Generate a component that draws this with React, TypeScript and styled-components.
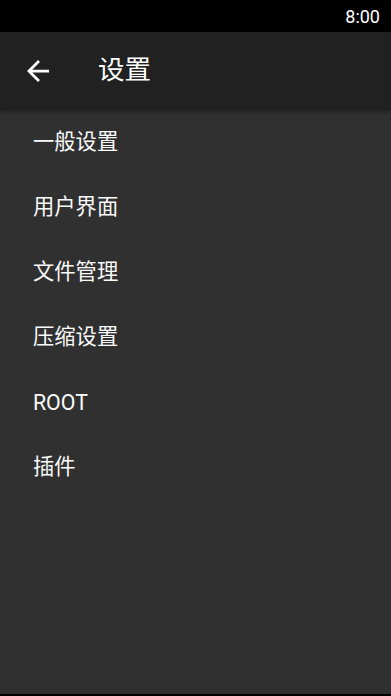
import React from "react";
import styled, { createGlobalStyle } from "styled-components";

const Global = createGlobalStyle`
  html, body { margin: 0; padding: 0; background: #303030; }
  body { font-family: Roboto, "Noto Sans CJK SC", sans-serif; }
  #root { height: 696px; }
`;

const Screen = styled.div`
  width: 391px;
  height: 696px;
  display: flex;
  flex-direction: column;
  background: #303030;
  overflow: hidden;
`;

const StatusBar = styled.div`
  height: 32px;
  background: #000;
  display: flex;
  align-items: center;
  justify-content: flex-end;
  padding-right: 11px;
  color: #fff;
  font-family: Roboto, sans-serif;
  font-size: 18px;
  flex-shrink: 0;
`;

const Toolbar = styled.div`
  height: 78px;
  background: #212121;
  display: flex;
  align-items: center;
  position: relative;
  z-index: 1;
  box-shadow: 0 2px 4px rgba(0, 0, 0, 0.35);
  flex-shrink: 0;
`;

const BackButton = styled.div`
  width: 32px;
  height: 32px;
  margin-left: 22px;
  display: flex;
  align-items: center;
  justify-content: center;
`;

const Title = styled.div`
  margin-left: 44px;
  color: #fff;
  font-family: Roboto, "Noto Sans CJK SC", sans-serif;
  font-size: 26.5px;
  padding-bottom: 7px;
`;

const List = styled.div`
  flex: 1;
  display: flex;
  flex-direction: column;
`;

const Item = styled.div<{ $cjk: boolean }>`
  height: 65px;
  box-sizing: border-box;
  display: flex;
  align-items: center;
  padding-left: 33px;
  padding-bottom: ${(p) => (p.$cjk ? "7px" : "0")};
  color: #fafafa;
  font-family: Roboto, "Noto Sans CJK SC", sans-serif;
  font-size: 21.3px;
`;

const NavEdge = styled.div`
  height: 2px;
  background: #000;
  flex-shrink: 0;
`;

const items = ["一般设置", "用户界面", "文件管理", "压缩设置", "ROOT", "插件"];

export default function App() {
  return (
    <Screen>
      <Global />
      <StatusBar>8:00</StatusBar>
      <Toolbar>
        <BackButton>
          <svg width="22" height="22" viewBox="0 0 16 16">
            <path d="M16 7H3.83l5.59-5.59L8 0 0 8l8 8 1.41-1.41L3.83 9H16z" fill="#fff" />
          </svg>
        </BackButton>
        <Title>设置</Title>
      </Toolbar>
      <List>
        {items.map((t) => (
          <Item key={t} $cjk={!/^[A-Za-z]+$/.test(t)}>
            {t}
          </Item>
        ))}
      </List>
      <NavEdge />
    </Screen>
  );
}
